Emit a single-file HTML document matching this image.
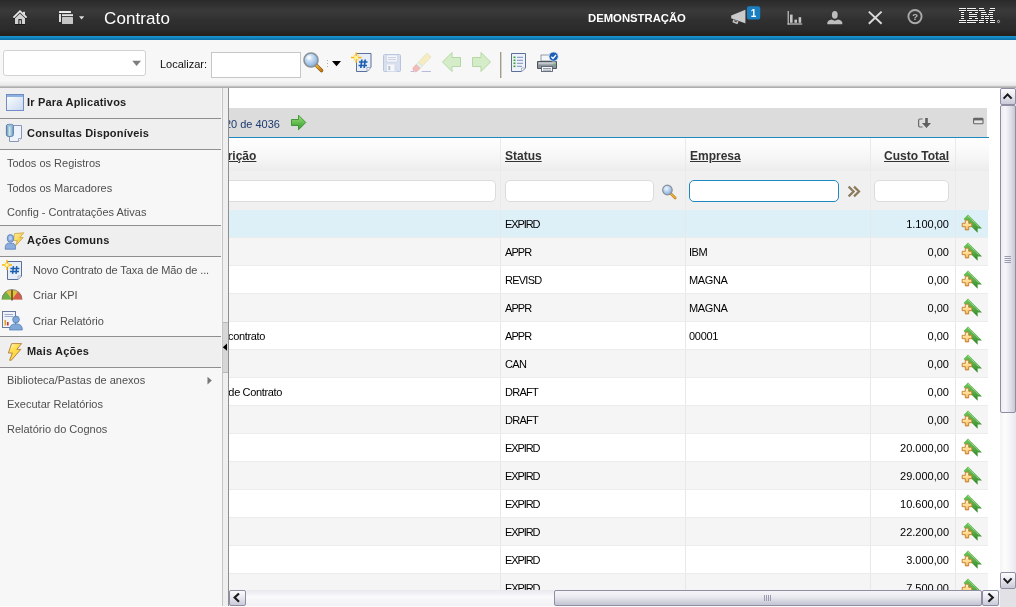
<!DOCTYPE html><html><head><meta charset="utf-8"><style>
*{box-sizing:border-box;margin:0;padding:0}
html,body{width:1016px;height:607px;overflow:hidden;background:#f7f7f7;font-family:"Liberation Sans",sans-serif;font-size:11px;color:#000}
.a{position:absolute}
.t{position:absolute;white-space:nowrap;line-height:12px;font-size:11px}
svg{position:absolute;overflow:visible}
#hdr{left:0;top:0;width:1016px;height:36px;background:linear-gradient(#2a2a2a 0px,#363636 8px,#3a3a3a 11px,#303030 20px,#2a2a2a 30px,#241f1c 35px)}
#blue{left:0;top:36px;width:1016px;height:4px;background:linear-gradient(#1c98d2,#0a6ea5)}
#tb{left:0;top:40px;width:1016px;height:48px;background:linear-gradient(#f7f7f7 0,#f7f7f7 41px,#f1f1f1 42px,#ebebeb 45px,#dadada 46px,#a8a8a8 47px,#b4b4b4 48px)}
#lp{left:0;top:88px;width:222px;height:519px;background:#f7f7f7}
.sh{position:absolute;left:0;width:221px;height:31px;background:#efefef;border-bottom:1px solid #8f8f8f}
.sht{position:absolute;left:27px;font-weight:bold;font-size:11px;line-height:12px;color:#1e1e1e;white-space:nowrap;letter-spacing:0.2px}
.li{position:absolute;left:7px;font-size:11px;line-height:12px;color:#4f4f4f;white-space:nowrap}
#spl{left:222px;top:88px;width:7px;height:519px;background:#efefef;border-left:1px solid #c4c4c4;border-right:1px solid #8e8e8e}
#main{left:229px;top:88px;width:771px;height:502px;background:#fff;overflow:hidden}
.row{position:absolute;left:0;width:759px;height:28px}
.sep{position:absolute;top:0;width:1px;height:28px;background:#e8e8e8}
.ct{position:absolute;top:9px;line-height:12px;white-space:nowrap;font-size:11px;color:#000}
.hd{position:absolute;top:61px;font-weight:bold;font-size:12px;line-height:14px;color:#333;text-decoration:underline;white-space:nowrap}
.fi{position:absolute;top:92px;height:22px;background:#fff;border:1px solid #dcdcdc;border-radius:5px}
.btn{position:absolute;border:1px solid #8e8ea2;border-radius:2px;background:linear-gradient(#fdfdff,#e6e6ee 50%,#c9c9d8)}
</style></head><body><div id="root" style="position:absolute;left:0;top:0;width:1016px;height:607px;overflow:hidden;background:#f7f7f7;will-change:transform">
<div id="hdr" class="a"></div><div id="blue" class="a"></div><div id="tb" class="a"></div>
<svg style="left:0;top:0" width="100" height="36"><g fill="#111" opacity="0.7"><rect x="15" y="24" width="10" height="1"/><rect x="13" y="18" width="2" height="1"/><rect x="25" y="18" width="2" height="1"/></g><path d="M13.4 17.6 L20 11.2 L26.6 17.6" stroke="#ececec" stroke-width="1.6" fill="none" stroke-linejoin="miter"/><rect x="22.9" y="11.8" width="2.1" height="3.6" fill="#dcdcdc"/><path d="M15 18.2 L20 13.4 L25 18.2 L25 24 L15 24Z" fill="#d2d2d2"/><rect x="18.4" y="19.1" width="3.4" height="4.9" fill="#1a1a1a"/><rect x="19.4" y="20.2" width="1.5" height="3.8" fill="#d8d8d8"/><rect x="59" y="11" width="12" height="2" rx="0.5" fill="#ededed"/><rect x="59" y="14" width="2" height="8" fill="#dedede"/><rect x="62" y="14.2" width="11" height="1.9" fill="#e6e6e6"/><rect x="62" y="17" width="11" height="7" rx="0.6" fill="#c6c6c6"/><path d="M79 16.2 L84.2 16.2 L81.6 19.6Z" fill="#dadada"/></svg>
<div class="a" style="left:104px;top:9px;font-size:17px;line-height:20px;color:#fff;letter-spacing:0.1px">Contrato</div>
<div class="a" style="left:588px;top:11px;font-size:11.3px;line-height:14px;color:#fff;font-weight:bold">DEMONSTRAÇÃO</div>
<svg style="left:720px;top:0" width="300" height="36"><path d="M11.2 15.4 L25.4 9.8 L25.4 23.6 L11.2 18.6Z" fill="#cacaca"/><path d="M11.2 18.6 L25.4 23.6" stroke="#1a1a1a" stroke-width="0.6" opacity="0.5"/><path d="M13.2 19.6 L18.6 21.6 L17.4 24.2 L12.4 22.2Z" fill="#c4c4c4"/><path d="M14.2 20.8 L16.8 21.8" stroke="#222" stroke-width="0.9"/><rect x="27" y="6.2" width="13.2" height="13.4" rx="2" fill="#1a7ec3"/><text x="33.5" y="17" font-family="Liberation Sans" font-weight="bold" font-size="10" fill="#fff" text-anchor="middle">1</text><g fill="#c4c4c4"><rect x="67.6" y="11" width="1.2" height="13.6"/><rect x="67.6" y="23.4" width="14.6" height="1.2"/><rect x="70" y="14.6" width="2.6" height="8.2"/><rect x="74.4" y="19.6" width="2.6" height="3.2"/><rect x="78.6" y="17.2" width="2.6" height="5.6"/></g><g fill="#bdbdbd"><ellipse cx="114.8" cy="14.8" rx="2.9" ry="3.9"/><path d="M107.3 24.2 L107.3 22.6 Q107.6 20.4 111.6 19.4 L114.8 20.8 L118 19.4 Q122 20.4 122.3 22.6 L122.3 24.2Z"/></g><path d="M148.8 11.6 L161.6 23.8 M161.6 11.6 L148.8 23.8" stroke="#d9d9d9" stroke-width="2" fill="none"/><circle cx="195" cy="16.6" r="6.6" stroke="#a9a9a9" stroke-width="1.9" fill="none"/><text x="195.2" y="20.4" font-family="Liberation Sans" font-weight="bold" font-size="9.6" fill="#b8b8b8" text-anchor="middle">?</text></svg>
<svg style="left:0;top:0" width="1016" height="36"><rect x="959" y="9" width="7" height="1" fill="#111"/><rect x="959" y="8" width="7" height="1.1" fill="#f2f2f2"/><rect x="967" y="9" width="9" height="1" fill="#111"/><rect x="967" y="8" width="9" height="1.1" fill="#f2f2f2"/><rect x="979" y="9" width="5" height="1" fill="#111"/><rect x="979" y="8" width="5" height="1.1" fill="#f2f2f2"/><rect x="990" y="9" width="5" height="1" fill="#111"/><rect x="990" y="8" width="5" height="1.1" fill="#f2f2f2"/><rect x="959" y="11" width="7" height="1" fill="#111"/><rect x="959" y="10" width="7" height="1.1" fill="#f2f2f2"/><rect x="967" y="11" width="11" height="1" fill="#111"/><rect x="967" y="10" width="11" height="1.1" fill="#f2f2f2"/><rect x="979" y="11" width="6" height="1" fill="#111"/><rect x="979" y="10" width="6" height="1.1" fill="#f2f2f2"/><rect x="989" y="11" width="6" height="1" fill="#111"/><rect x="989" y="10" width="6" height="1.1" fill="#f2f2f2"/><rect x="961" y="13" width="3" height="1" fill="#111"/><rect x="961" y="12" width="3" height="1.1" fill="#f2f2f2"/><rect x="969" y="13" width="3" height="1" fill="#111"/><rect x="969" y="12" width="3" height="1.1" fill="#f2f2f2"/><rect x="975" y="13" width="3" height="1" fill="#111"/><rect x="975" y="12" width="3" height="1.1" fill="#f2f2f2"/><rect x="981" y="13" width="5" height="1" fill="#111"/><rect x="981" y="12" width="5" height="1.1" fill="#f2f2f2"/><rect x="989" y="13" width="4" height="1" fill="#111"/><rect x="989" y="12" width="4" height="1.1" fill="#f2f2f2"/><rect x="961" y="15" width="3" height="1" fill="#111"/><rect x="961" y="14" width="3" height="1.1" fill="#f2f2f2"/><rect x="969" y="15" width="8" height="1" fill="#111"/><rect x="969" y="14" width="8" height="1.1" fill="#f2f2f2"/><rect x="981" y="15" width="6" height="1" fill="#111"/><rect x="981" y="14" width="6" height="1.1" fill="#f2f2f2"/><rect x="988" y="15" width="5" height="1" fill="#111"/><rect x="988" y="14" width="5" height="1.1" fill="#f2f2f2"/><rect x="961" y="17" width="3" height="1" fill="#111"/><rect x="961" y="16" width="3" height="1.1" fill="#f2f2f2"/><rect x="969" y="17" width="8" height="1" fill="#111"/><rect x="969" y="16" width="8" height="1.1" fill="#f2f2f2"/><rect x="981" y="17" width="3" height="1" fill="#111"/><rect x="981" y="16" width="3" height="1.1" fill="#f2f2f2"/><rect x="985" y="17" width="4" height="1" fill="#111"/><rect x="985" y="16" width="4" height="1.1" fill="#f2f2f2"/><rect x="990" y="17" width="3" height="1" fill="#111"/><rect x="990" y="16" width="3" height="1.1" fill="#f2f2f2"/><rect x="961" y="19" width="3" height="1" fill="#111"/><rect x="961" y="18" width="3" height="1.1" fill="#f2f2f2"/><rect x="969" y="19" width="3" height="1" fill="#111"/><rect x="969" y="18" width="3" height="1.1" fill="#f2f2f2"/><rect x="975" y="19" width="3" height="1" fill="#111"/><rect x="975" y="18" width="3" height="1.1" fill="#f2f2f2"/><rect x="981" y="19" width="3" height="1" fill="#111"/><rect x="981" y="18" width="3" height="1.1" fill="#f2f2f2"/><rect x="985" y="19" width="4" height="1" fill="#111"/><rect x="985" y="18" width="4" height="1.1" fill="#f2f2f2"/><rect x="990" y="19" width="3" height="1" fill="#111"/><rect x="990" y="18" width="3" height="1.1" fill="#f2f2f2"/><rect x="959" y="21" width="7" height="1" fill="#111"/><rect x="959" y="20" width="7" height="1.1" fill="#f2f2f2"/><rect x="967" y="21" width="11" height="1" fill="#111"/><rect x="967" y="20" width="11" height="1.1" fill="#f2f2f2"/><rect x="979" y="21" width="5" height="1" fill="#111"/><rect x="979" y="20" width="5" height="1.1" fill="#f2f2f2"/><rect x="986" y="21" width="2" height="1" fill="#111"/><rect x="986" y="20" width="2" height="1.1" fill="#f2f2f2"/><rect x="990" y="21" width="5" height="1" fill="#111"/><rect x="990" y="20" width="5" height="1.1" fill="#f2f2f2"/><rect x="959" y="23" width="7" height="1" fill="#111"/><rect x="959" y="22" width="7" height="1.1" fill="#f2f2f2"/><rect x="967" y="23" width="9" height="1" fill="#111"/><rect x="967" y="22" width="9" height="1.1" fill="#f2f2f2"/><rect x="979" y="23" width="5" height="1" fill="#111"/><rect x="979" y="22" width="5" height="1.1" fill="#f2f2f2"/><rect x="986" y="23" width="2" height="1" fill="#111"/><rect x="986" y="22" width="2" height="1.1" fill="#f2f2f2"/><rect x="990" y="23" width="5" height="1" fill="#111"/><rect x="990" y="22" width="5" height="1.1" fill="#f2f2f2"/><circle cx="998.5" cy="21.5" r="1.1" fill="none" stroke="#d0d0d0" stroke-width="0.8"/></svg>
<div class="a" style="left:3px;top:50px;width:143px;height:26px;background:#fff;border:1px solid #d2d2d2;border-radius:3px"></div>
<svg style="left:0;top:40px" width="600" height="48"><path d="M132.2 20.8 L141 20.8 L136.6 26Z" fill="#7e7e7e"/></svg>
<div class="t" style="left:160px;top:58px;color:#111">Localizar:</div>
<div class="a" style="left:211px;top:52px;width:90px;height:26px;background:#fff;border:1px solid #c6c6c6"></div>
<svg style="left:0;top:0" width="600" height="90"><defs><radialGradient id="lens" cx="0.4" cy="0.35" r="0.7"><stop offset="0" stop-color="#eef6ff"/><stop offset="0.6" stop-color="#a9c8ea"/><stop offset="1" stop-color="#7fa6d2"/></radialGradient><linearGradient id="hnd" x1="0" y1="0" x2="1" y2="1"><stop offset="0" stop-color="#f7c23a"/><stop offset="1" stop-color="#c77a10"/></linearGradient></defs><path d="M315.5 64.5 L321.5 70.5" stroke="#8c5a10" stroke-width="3.6" stroke-linecap="round"/><path d="M315.5 64.5 L321.5 70.5" stroke="url(#hnd)" stroke-width="2.4" stroke-linecap="round"/><circle cx="311" cy="60" r="7" fill="url(#lens)" stroke="#8a8f98" stroke-width="1.6"/><circle cx="308.8" cy="57.6" r="2.2" fill="#fff" opacity="0.6"/><g fill="#b0b0b0"><rect x="327" y="60" width="1" height="1"/><rect x="327" y="63" width="1" height="1"/><rect x="327" y="66" width="1" height="1"/></g><path d="M332 61 L341 61 L336.5 66.3Z" fill="#000"/><path d="M356.5 53.5 L371 53.5 L371 67 L367 71.5 L356.5 71.5Z" fill="#e8eef8" stroke="#5a6f9a" stroke-width="1"/><path d="M367 71.5 L367 67.5 L371 67.5Z" fill="#fff" stroke="#8a9bb8" stroke-width="0.8"/><g stroke="#1d5fb0" stroke-width="1.7" fill="none"><path d="M361.8 59.5 L360.8 68 M365.2 59.5 L364.2 68 M359 62 L367.5 62 M358.5 65.5 L367 65.5"/></g><g stroke="#ffb400" stroke-width="1.5" fill="none"><path d="M351 57.6 L361.4 57.6 M356.2 52.4 L356.2 62.8"/></g><g stroke="#ffc800" stroke-width="0.8" fill="none"><path d="M353.6 55 L358.8 60.2 M358.8 55 L353.6 60.2"/></g><circle cx="356.2" cy="57.6" r="1.9" fill="#fff4a0"/><g opacity="0.6"><rect x="383.5" y="54.5" width="17" height="17" rx="1" fill="#c4d0ea" stroke="#90a4cc"/><rect x="386.5" y="55" width="11" height="7" fill="#f4f6fb" stroke="#a8b6d4" stroke-width="0.6"/><path d="M388 57.5 L396 57.5 M388 59.5 L396 59.5" stroke="#98a8cc" stroke-width="0.8"/><rect x="387" y="64.5" width="10" height="7" fill="#f4f6fb"/><rect x="388.4" y="66" width="1.8" height="4.2" fill="#8898bc"/><rect x="394.4" y="64.5" width="2.6" height="7" fill="#c0cce6"/></g><g opacity="0.55"><g transform="translate(416.2,68.4) rotate(-46)"><rect x="5.6" y="-2.8" width="13" height="5.6" rx="1.2" fill="#f4e49a" stroke="#d8c070" stroke-width="0.6"/><rect x="2.6" y="-2.8" width="3.4" height="5.6" fill="#d8f0e8" stroke="#98c8b8" stroke-width="0.5"/><path d="M2.8 -2.8 L-1 -2.8 Q-3.4 -2.8 -3.4 0 Q-3.4 2.8 -1 2.8 L2.8 2.8Z" fill="#f08a8a" stroke="#c86a6a" stroke-width="0.5"/></g><path d="M410.6 71.5 L414 71.5 M421.6 71.5 L431 71.5" stroke="#8a8ad0" stroke-width="1.2"/></g><path d="M442.5 62 L452 52.5 L452 57.5 L460.5 57.5 L460.5 66.5 L452 66.5 L452 71.5Z" fill="#d4ecc8" stroke="#b4d8a4" stroke-width="1"/><path d="M490.5 62 L481 52.5 L481 57.5 L472.5 57.5 L472.5 66.5 L481 66.5 L481 71.5Z" fill="#d4ecc8" stroke="#b4d8a4" stroke-width="1"/><rect x="500" y="52" width="1.4" height="26" fill="#a39e8c"/><path d="M511.5 53.5 L525.5 53.5 L525.5 68 L521.5 71.5 L511.5 71.5Z" fill="#eef2fa" stroke="#5f6f95" stroke-width="1"/><path d="M521.5 71.5 L521.5 68 L525.5 68Z" fill="#fff" stroke="#8a9bb8" stroke-width="0.7"/><g fill="#3aa52a"><rect x="513.5" y="56.5" width="2" height="1.6"/><rect x="513.5" y="59.5" width="2" height="1.6"/><rect x="513.5" y="62.5" width="2" height="1.6"/><rect x="513.5" y="65.5" width="2" height="1.6"/></g><g fill="#7f8fb8"><rect x="517" y="56.8" width="6" height="1"/><rect x="517" y="59.8" width="6" height="1"/><rect x="517" y="62.8" width="6" height="1"/><rect x="517" y="65.8" width="5" height="1"/></g><rect x="541" y="55" width="11" height="6" fill="#f4f6fa" stroke="#7c8494" stroke-width="0.8"/><path d="M537.5 61.5 L556.5 61.5 L556.5 68.5 L537.5 68.5Z" fill="#8e949c" stroke="#4e545c" stroke-width="1"/><rect x="538.5" y="62.2" width="17" height="2.2" fill="#c4c8ce"/><rect x="541.5" y="66.5" width="11" height="5" fill="#f4f6fa" stroke="#5a6472" stroke-width="0.9"/><path d="M543 68.5 L551 68.5 M543 70.2 L551 70.2" stroke="#6e7888" stroke-width="0.7"/><rect x="553.5" y="63.5" width="1.5" height="1.2" fill="#3c3"/><circle cx="553.6" cy="56.6" r="4.6" fill="#1b5fb8" stroke="#d8e4f4" stroke-width="0.8"/><path d="M551.3 56.8 L553 58.5 L556 55" stroke="#fff" stroke-width="1.3" fill="none"/></svg>
<div id="lp" class="a">
<div class="sh" style="top:0;height:31px"></div>
<div class="sh" style="top:31px;height:31px"></div>
<div class="sht" style="top:8px">Ir Para Aplicativos</div>
<div class="sht" style="top:39px">Consultas Disponíveis</div>
<div class="li" style="top:69px">Todos os Registros</div>
<div class="li" style="top:94px">Todos os Marcadores</div>
<div class="li" style="top:118px">Config - Contratações Ativas</div>
<div class="sh" style="top:137px;height:32px;border-top:1px solid #8f8f8f"></div>
<div class="sht" style="top:146px">Ações Comuns</div>
<div class="li" style="left:33px;top:176px;letter-spacing:-0.1px">Novo Contrato de Taxa de Mão de ...</div>
<div class="li" style="left:33px;top:201px">Criar KPI</div>
<div class="li" style="left:33px;top:227px">Criar Relatório</div>
<div class="sh" style="top:248px;height:32px;border-top:1px solid #8f8f8f"></div>
<div class="sht" style="top:257px">Mais Ações</div>
<div class="li" style="top:286px">Biblioteca/Pastas de anexos</div>
<div class="li" style="top:310px">Executar Relatórios</div>
<div class="li" style="top:335px">Relatório do Cognos</div>
</div>
<svg style="left:0;top:0" width="230" height="607"><defs><linearGradient id="win" x1="0" y1="0" x2="1" y2="1"><stop offset="0" stop-color="#ffffff"/><stop offset="1" stop-color="#c8d8f0"/></linearGradient><linearGradient id="bolt" x1="0" y1="0" x2="1" y2="1"><stop offset="0" stop-color="#fff3a0"/><stop offset="1" stop-color="#f0b818"/></linearGradient><linearGradient id="bolt2" x1="0" y1="0" x2="0.6" y2="1"><stop offset="0" stop-color="#fffbe0"/><stop offset="0.4" stop-color="#ffe050"/><stop offset="1" stop-color="#f8d040"/></linearGradient><linearGradient id="cyl" x1="0" y1="0" x2="1" y2="0"><stop offset="0" stop-color="#5a8ab0"/><stop offset="0.45" stop-color="#d0e6ee"/><stop offset="1" stop-color="#6a98b8"/></linearGradient></defs><rect x="6.5" y="94.5" width="17" height="16" fill="url(#win)" stroke="#6e8ec4" stroke-width="1"/><rect x="7" y="95" width="16" height="2" fill="#8eb0e0"/><path d="M9.5 125.5 L21.5 125.5 L21.5 138.5 L18.5 141.5 L9.5 141.5Z" fill="#eef2fa" stroke="#8a96b8" stroke-width="1"/><path d="M18.5 141.5 L18.5 138.5 L21.5 138.5" fill="#fff" stroke="#8a96b8" stroke-width="0.8"/><rect x="6.4" y="124.4" width="7" height="12" rx="1.8" fill="url(#cyl)" stroke="#4f78a8" stroke-width="0.9"/><ellipse cx="9.9" cy="125.8" rx="3" ry="1" fill="#9ac0d8"/><path d="M14.5 233.6 L23.8 232.8 L19.8 237.6 L23.2 237.6 L15.2 246.2 L17.4 240.6 L13.4 240.6Z" fill="url(#bolt)" stroke="#c89a30" stroke-width="0.7"/><path d="M5.2 249.2 Q5 243.6 8.2 243.2 L12.6 243.2 Q15.8 243.6 15.6 249.2Z" fill="#8aaee0" stroke="#5c7cb8" stroke-width="0.8"/><ellipse cx="10.4" cy="238.4" rx="3.2" ry="3.9" fill="#8aaee0" stroke="#5c7cb8" stroke-width="0.8"/><ellipse cx="10.4" cy="238" rx="1.6" ry="2" fill="#b8d0f0"/><path d="M7.5 261.5 L21.5 261.5 L21.5 276 L18 279.5 L7.5 279.5Z" fill="#e8eef8" stroke="#5a6f9a" stroke-width="1"/><path d="M18 279.5 L18 276 L21.5 276Z" fill="#fff" stroke="#8a9bb8" stroke-width="0.7"/><g stroke="#1d5fb0" stroke-width="1.5" fill="none"><path d="M13.4 266.2 L12.6 273.8 M16.8 266.2 L16 273.8 M10.4 268.6 L19.4 268.6 M10 271.6 L19 271.6"/></g><g stroke="#ffb400" stroke-width="1.5" fill="none"><path d="M2 265 L12 265 M7 260 L7 270"/></g><g stroke="#ffc800" stroke-width="0.8" fill="none"><path d="M4.6 262.6 L9.4 267.4 M9.4 262.6 L4.6 267.4"/></g><circle cx="7" cy="265" r="1.8" fill="#fff4a0"/><path d="M2 299.5 A10 10 0 0 1 22 299.5Z" fill="#e0c040"/><path d="M2 299.5 A10 10 0 0 1 6 291.5 L12 299.5Z" fill="#6cb04a"/><path d="M22 299.5 A10 10 0 0 0 18 291.5 L12 299.5Z" fill="#d85a4a"/><path d="M2 299.5 A10 10 0 0 1 22 299.5" fill="none" stroke="#777" stroke-width="0.8"/><rect x="11.5" y="290" width="1" height="10.5" fill="#111"/><rect x="2.5" y="311.5" width="13" height="16" fill="#f0f4fa" stroke="#6a7a9a" stroke-width="1"/><path d="M4.5 314.5 L13 314.5 M4.5 316.5 L13 316.5" stroke="#8a9ac0" stroke-width="0.8"/><rect x="4.5" y="320" width="1.6" height="5.5" fill="#e0a020"/><rect x="7" y="322" width="1.6" height="3.5" fill="#d03030"/><circle cx="16" cy="319.5" r="3.4" fill="#7fa8d8" stroke="#4a78b0" stroke-width="0.7"/><path d="M9.5 330 Q9.5 323.8 16 323.8 Q22.4 323.8 22.4 330Z" fill="#7fa8d8" stroke="#4a78b0" stroke-width="0.7"/><path d="M11.6 343.6 L21.6 343.6 L16.8 349.4 L20.8 349.4 L11.2 360.4 L9.6 360.2 L12.4 353 L8.4 353Z" fill="url(#bolt2)" stroke="#b07c3a" stroke-width="0.9" stroke-linejoin="round"/><path d="M207.5 376.8 L211.8 380.6 L207.5 384.4Z" fill="#777"/></svg>
<div id="spl" class="a"></div>
<div class="a" style="left:223px;top:322px;width:5px;height:51px;background:#d6d6d6;border-top:1px solid #b8b8b8;border-bottom:1px solid #b8b8b8"></div>
<svg style="left:0;top:0" width="230" height="607"><path d="M222.8 347.2 L227 343.6 L227 350.8Z" fill="#000"/></svg>
<div id="main" class="a">
<div class="a" style="left:0;top:20px;width:758px;height:29px;background:#dcdcdc"></div>
<div class="a" style="left:0;top:49px;width:760px;height:1px;background:#1e88c0"></div>
<div class="t" style="left:-20px;top:30px;color:#1c3a6e">1 - 20 de 4036</div>
<div class="a" style="left:0;top:50px;width:760px;height:33px;background:linear-gradient(#ffffff,#f6f6f6 60%,#ececec)"></div>
<div class="a" style="left:0;top:83px;width:760px;height:39px;background:#f0f0f0"></div><div class="a" style="left:0;top:121px;width:760px;height:1px;background:#f0f0f0;z-index:5"></div>
<div class="a" style="left:271px;top:50px;width:1px;height:72px;background:#eaeaea"></div>
<div class="a" style="left:456px;top:50px;width:1px;height:72px;background:#eaeaea"></div>
<div class="a" style="left:641px;top:50px;width:1px;height:72px;background:#eaeaea"></div>
<div class="a" style="left:726px;top:50px;width:1px;height:72px;background:#eaeaea"></div>
<div class="hd" style="left:-30px">Descrição</div>
<div class="hd" style="left:276px">Status</div>
<div class="hd" style="left:461px">Empresa</div>
<div class="hd" style="left:655px">Custo Total</div>
<div class="fi" style="left:-20px;width:287px"></div>
<div class="fi" style="left:276px;width:149px"></div>
<div class="fi" style="left:460px;width:150px;border:1.5px solid #1e88c0"></div>
<div class="fi" style="left:645px;width:75px"></div>
<div class="row" style="top:121px;background:#ddf0f8">
<div class="sep" style="left:271px"></div><div class="sep" style="left:456px"></div><div class="sep" style="left:641px"></div><div class="sep" style="left:726px"></div>
<div class="ct" style="left:276px;letter-spacing:-1.1px">EXPIRD</div>
<div class="ct" style="right:39px">1.100,00</div>
</div>
<div class="row" style="top:149px;background:#f5f5f5">
<div class="sep" style="left:271px"></div><div class="sep" style="left:456px"></div><div class="sep" style="left:641px"></div><div class="sep" style="left:726px"></div>
<div class="ct" style="left:276px;letter-spacing:-0.9px">APPR</div>
<div class="ct" style="left:460px;letter-spacing:-0.5px">IBM</div>
<div class="ct" style="right:39px">0,00</div>
</div>
<div class="a" style="left:0;top:149px;width:759px;height:1px;background:#ececec"></div>
<div class="row" style="top:177px;background:#ffffff">
<div class="sep" style="left:271px"></div><div class="sep" style="left:456px"></div><div class="sep" style="left:641px"></div><div class="sep" style="left:726px"></div>
<div class="ct" style="left:276px;letter-spacing:-0.75px">REVISD</div>
<div class="ct" style="left:460px;letter-spacing:-0.36px">MAGNA</div>
<div class="ct" style="right:39px">0,00</div>
</div>
<div class="a" style="left:0;top:177px;width:759px;height:1px;background:#ececec"></div>
<div class="row" style="top:205px;background:#f5f5f5">
<div class="sep" style="left:271px"></div><div class="sep" style="left:456px"></div><div class="sep" style="left:641px"></div><div class="sep" style="left:726px"></div>
<div class="ct" style="left:276px;letter-spacing:-0.9px">APPR</div>
<div class="ct" style="left:460px;letter-spacing:-0.36px">MAGNA</div>
<div class="ct" style="right:39px">0,00</div>
</div>
<div class="a" style="left:0;top:205px;width:759px;height:1px;background:#ececec"></div>
<div class="row" style="top:233px;background:#ffffff">
<div class="ct" style="right:723px;letter-spacing:-0.35px">Descrição do contrato</div>
<div class="sep" style="left:271px"></div><div class="sep" style="left:456px"></div><div class="sep" style="left:641px"></div><div class="sep" style="left:726px"></div>
<div class="ct" style="left:276px;letter-spacing:-0.9px">APPR</div>
<div class="ct" style="left:460px;letter-spacing:-0.3px">00001</div>
<div class="ct" style="right:39px">0,00</div>
</div>
<div class="a" style="left:0;top:233px;width:759px;height:1px;background:#ececec"></div>
<div class="row" style="top:261px;background:#f5f5f5">
<div class="sep" style="left:271px"></div><div class="sep" style="left:456px"></div><div class="sep" style="left:641px"></div><div class="sep" style="left:726px"></div>
<div class="ct" style="left:276px;letter-spacing:-0.7px">CAN</div>
<div class="ct" style="right:39px">0,00</div>
</div>
<div class="a" style="left:0;top:261px;width:759px;height:1px;background:#ececec"></div>
<div class="row" style="top:289px;background:#ffffff">
<div class="ct" style="right:706px;letter-spacing:-0.35px">Descrição de Contrato</div>
<div class="sep" style="left:271px"></div><div class="sep" style="left:456px"></div><div class="sep" style="left:641px"></div><div class="sep" style="left:726px"></div>
<div class="ct" style="left:276px;letter-spacing:-0.75px">DRAFT</div>
<div class="ct" style="right:39px">0,00</div>
</div>
<div class="a" style="left:0;top:289px;width:759px;height:1px;background:#ececec"></div>
<div class="row" style="top:317px;background:#f5f5f5">
<div class="sep" style="left:271px"></div><div class="sep" style="left:456px"></div><div class="sep" style="left:641px"></div><div class="sep" style="left:726px"></div>
<div class="ct" style="left:276px;letter-spacing:-0.75px">DRAFT</div>
<div class="ct" style="right:39px">0,00</div>
</div>
<div class="a" style="left:0;top:317px;width:759px;height:1px;background:#ececec"></div>
<div class="row" style="top:345px;background:#ffffff">
<div class="sep" style="left:271px"></div><div class="sep" style="left:456px"></div><div class="sep" style="left:641px"></div><div class="sep" style="left:726px"></div>
<div class="ct" style="left:276px;letter-spacing:-1.1px">EXPIRD</div>
<div class="ct" style="right:39px">20.000,00</div>
</div>
<div class="a" style="left:0;top:345px;width:759px;height:1px;background:#ececec"></div>
<div class="row" style="top:373px;background:#f5f5f5">
<div class="sep" style="left:271px"></div><div class="sep" style="left:456px"></div><div class="sep" style="left:641px"></div><div class="sep" style="left:726px"></div>
<div class="ct" style="left:276px;letter-spacing:-1.1px">EXPIRD</div>
<div class="ct" style="right:39px">29.000,00</div>
</div>
<div class="a" style="left:0;top:373px;width:759px;height:1px;background:#ececec"></div>
<div class="row" style="top:401px;background:#ffffff">
<div class="sep" style="left:271px"></div><div class="sep" style="left:456px"></div><div class="sep" style="left:641px"></div><div class="sep" style="left:726px"></div>
<div class="ct" style="left:276px;letter-spacing:-1.1px">EXPIRD</div>
<div class="ct" style="right:39px">10.600,00</div>
</div>
<div class="a" style="left:0;top:401px;width:759px;height:1px;background:#ececec"></div>
<div class="row" style="top:429px;background:#f5f5f5">
<div class="sep" style="left:271px"></div><div class="sep" style="left:456px"></div><div class="sep" style="left:641px"></div><div class="sep" style="left:726px"></div>
<div class="ct" style="left:276px;letter-spacing:-1.1px">EXPIRD</div>
<div class="ct" style="right:39px">22.200,00</div>
</div>
<div class="a" style="left:0;top:429px;width:759px;height:1px;background:#ececec"></div>
<div class="row" style="top:457px;background:#ffffff">
<div class="sep" style="left:271px"></div><div class="sep" style="left:456px"></div><div class="sep" style="left:641px"></div><div class="sep" style="left:726px"></div>
<div class="ct" style="left:276px;letter-spacing:-1.1px">EXPIRD</div>
<div class="ct" style="right:39px">3.000,00</div>
</div>
<div class="a" style="left:0;top:457px;width:759px;height:1px;background:#ececec"></div>
<div class="row" style="top:485px;background:#f5f5f5">
<div class="sep" style="left:271px"></div><div class="sep" style="left:456px"></div><div class="sep" style="left:641px"></div><div class="sep" style="left:726px"></div>
<div class="ct" style="left:276px;letter-spacing:-1.1px">EXPIRD</div>
<div class="ct" style="right:39px">7.500,00</div>
</div>
<div class="a" style="left:0;top:485px;width:759px;height:1px;background:#ececec"></div>
</div>
<svg style="left:229px;top:88px" width="771" height="502" viewBox="229 88 771 502"><defs><linearGradient id="ga" x1="0" y1="0" x2="0" y2="1"><stop offset="0" stop-color="#9de07a"/><stop offset="1" stop-color="#2f9a2a"/></linearGradient><linearGradient id="rib" x1="0" y1="0" x2="0" y2="1" gradientUnits="objectBoundingBox"><stop offset="0" stop-color="#6cc65a"/><stop offset="0.5" stop-color="#5ab04a"/><stop offset="1" stop-color="#2a8424"/></linearGradient><linearGradient id="plus" x1="0" y1="0" x2="0" y2="1"><stop offset="0" stop-color="#fff4c8"/><stop offset="0.6" stop-color="#ffd88a"/><stop offset="1" stop-color="#f0b050"/></linearGradient><clipPath id="cl"><rect x="229" y="88" width="771" height="502"/></clipPath></defs><g clip-path="url(#cl)"><path d="M291.5 119.5 L298.5 119.5 L298.5 115.2 L305.8 122.5 L298.5 129.8 L298.5 125.5 L291.5 125.5Z" fill="url(#ga)" stroke="#2a8a20" stroke-width="0.8"/><path d="M922.6 119 L920 119 Q918.6 119 918.6 120.4 L918.6 125.6 Q918.6 127 920 127 L922.6 127" stroke="#6a6a6a" stroke-width="1.2" fill="none"/><path d="M925.2 118 L927.8 118 L927.8 123 L931 123 L926.5 128 L922 123 L925.2 123Z" fill="#5e5e5e"/><rect x="973.6" y="118.4" width="9.4" height="5.4" rx="0.9" fill="#e6e6e6" stroke="#666" stroke-width="1.1"/><rect x="973.6" y="118.4" width="9.4" height="2" fill="#666"/><path d="M670.6 193.4 L675.2 198" stroke="#b07a18" stroke-width="2.6" stroke-linecap="round"/><path d="M670.6 193.4 L675.2 198" stroke="#f2b640" stroke-width="1.4" stroke-linecap="round"/><circle cx="667.4" cy="190" r="4.8" fill="url(#lens)" stroke="#8a8f98" stroke-width="1.2"/><path d="M848.6 186.6 L853.6 191.5 L848.6 196.4 M854 186.6 L859 191.5 L854 196.4" stroke="#8c7a5c" stroke-width="2.2" fill="none"/><g transform="translate(962,215)"><path d="M6 -0.6 L20 13.4 L15.6 13.4 L15.7 17.8 L1.6 4Z" fill="url(#rib)"/><path d="M6.2 1.2 L17.6 12.6" stroke="#e8ffe0" stroke-width="0.8" stroke-dasharray="1 0.8" opacity="0.8"/><path d="M0.2 8.3 L0.2 11.7 L3.3 11.7 L3.3 14.9 L6.7 14.9 L6.7 11.7 L9.8 11.7 L9.8 8.3 L6.7 8.3 L6.7 5.2 L3.3 5.2 L3.3 8.3Z" fill="url(#plus)" stroke="#c27a2a" stroke-width="0.9" stroke-linejoin="round"/></g><g transform="translate(962,243)"><path d="M6 -0.6 L20 13.4 L15.6 13.4 L15.7 17.8 L1.6 4Z" fill="url(#rib)"/><path d="M6.2 1.2 L17.6 12.6" stroke="#e8ffe0" stroke-width="0.8" stroke-dasharray="1 0.8" opacity="0.8"/><path d="M0.2 8.3 L0.2 11.7 L3.3 11.7 L3.3 14.9 L6.7 14.9 L6.7 11.7 L9.8 11.7 L9.8 8.3 L6.7 8.3 L6.7 5.2 L3.3 5.2 L3.3 8.3Z" fill="url(#plus)" stroke="#c27a2a" stroke-width="0.9" stroke-linejoin="round"/></g><g transform="translate(962,271)"><path d="M6 -0.6 L20 13.4 L15.6 13.4 L15.7 17.8 L1.6 4Z" fill="url(#rib)"/><path d="M6.2 1.2 L17.6 12.6" stroke="#e8ffe0" stroke-width="0.8" stroke-dasharray="1 0.8" opacity="0.8"/><path d="M0.2 8.3 L0.2 11.7 L3.3 11.7 L3.3 14.9 L6.7 14.9 L6.7 11.7 L9.8 11.7 L9.8 8.3 L6.7 8.3 L6.7 5.2 L3.3 5.2 L3.3 8.3Z" fill="url(#plus)" stroke="#c27a2a" stroke-width="0.9" stroke-linejoin="round"/></g><g transform="translate(962,299)"><path d="M6 -0.6 L20 13.4 L15.6 13.4 L15.7 17.8 L1.6 4Z" fill="url(#rib)"/><path d="M6.2 1.2 L17.6 12.6" stroke="#e8ffe0" stroke-width="0.8" stroke-dasharray="1 0.8" opacity="0.8"/><path d="M0.2 8.3 L0.2 11.7 L3.3 11.7 L3.3 14.9 L6.7 14.9 L6.7 11.7 L9.8 11.7 L9.8 8.3 L6.7 8.3 L6.7 5.2 L3.3 5.2 L3.3 8.3Z" fill="url(#plus)" stroke="#c27a2a" stroke-width="0.9" stroke-linejoin="round"/></g><g transform="translate(962,327)"><path d="M6 -0.6 L20 13.4 L15.6 13.4 L15.7 17.8 L1.6 4Z" fill="url(#rib)"/><path d="M6.2 1.2 L17.6 12.6" stroke="#e8ffe0" stroke-width="0.8" stroke-dasharray="1 0.8" opacity="0.8"/><path d="M0.2 8.3 L0.2 11.7 L3.3 11.7 L3.3 14.9 L6.7 14.9 L6.7 11.7 L9.8 11.7 L9.8 8.3 L6.7 8.3 L6.7 5.2 L3.3 5.2 L3.3 8.3Z" fill="url(#plus)" stroke="#c27a2a" stroke-width="0.9" stroke-linejoin="round"/></g><g transform="translate(962,355)"><path d="M6 -0.6 L20 13.4 L15.6 13.4 L15.7 17.8 L1.6 4Z" fill="url(#rib)"/><path d="M6.2 1.2 L17.6 12.6" stroke="#e8ffe0" stroke-width="0.8" stroke-dasharray="1 0.8" opacity="0.8"/><path d="M0.2 8.3 L0.2 11.7 L3.3 11.7 L3.3 14.9 L6.7 14.9 L6.7 11.7 L9.8 11.7 L9.8 8.3 L6.7 8.3 L6.7 5.2 L3.3 5.2 L3.3 8.3Z" fill="url(#plus)" stroke="#c27a2a" stroke-width="0.9" stroke-linejoin="round"/></g><g transform="translate(962,383)"><path d="M6 -0.6 L20 13.4 L15.6 13.4 L15.7 17.8 L1.6 4Z" fill="url(#rib)"/><path d="M6.2 1.2 L17.6 12.6" stroke="#e8ffe0" stroke-width="0.8" stroke-dasharray="1 0.8" opacity="0.8"/><path d="M0.2 8.3 L0.2 11.7 L3.3 11.7 L3.3 14.9 L6.7 14.9 L6.7 11.7 L9.8 11.7 L9.8 8.3 L6.7 8.3 L6.7 5.2 L3.3 5.2 L3.3 8.3Z" fill="url(#plus)" stroke="#c27a2a" stroke-width="0.9" stroke-linejoin="round"/></g><g transform="translate(962,411)"><path d="M6 -0.6 L20 13.4 L15.6 13.4 L15.7 17.8 L1.6 4Z" fill="url(#rib)"/><path d="M6.2 1.2 L17.6 12.6" stroke="#e8ffe0" stroke-width="0.8" stroke-dasharray="1 0.8" opacity="0.8"/><path d="M0.2 8.3 L0.2 11.7 L3.3 11.7 L3.3 14.9 L6.7 14.9 L6.7 11.7 L9.8 11.7 L9.8 8.3 L6.7 8.3 L6.7 5.2 L3.3 5.2 L3.3 8.3Z" fill="url(#plus)" stroke="#c27a2a" stroke-width="0.9" stroke-linejoin="round"/></g><g transform="translate(962,439)"><path d="M6 -0.6 L20 13.4 L15.6 13.4 L15.7 17.8 L1.6 4Z" fill="url(#rib)"/><path d="M6.2 1.2 L17.6 12.6" stroke="#e8ffe0" stroke-width="0.8" stroke-dasharray="1 0.8" opacity="0.8"/><path d="M0.2 8.3 L0.2 11.7 L3.3 11.7 L3.3 14.9 L6.7 14.9 L6.7 11.7 L9.8 11.7 L9.8 8.3 L6.7 8.3 L6.7 5.2 L3.3 5.2 L3.3 8.3Z" fill="url(#plus)" stroke="#c27a2a" stroke-width="0.9" stroke-linejoin="round"/></g><g transform="translate(962,467)"><path d="M6 -0.6 L20 13.4 L15.6 13.4 L15.7 17.8 L1.6 4Z" fill="url(#rib)"/><path d="M6.2 1.2 L17.6 12.6" stroke="#e8ffe0" stroke-width="0.8" stroke-dasharray="1 0.8" opacity="0.8"/><path d="M0.2 8.3 L0.2 11.7 L3.3 11.7 L3.3 14.9 L6.7 14.9 L6.7 11.7 L9.8 11.7 L9.8 8.3 L6.7 8.3 L6.7 5.2 L3.3 5.2 L3.3 8.3Z" fill="url(#plus)" stroke="#c27a2a" stroke-width="0.9" stroke-linejoin="round"/></g><g transform="translate(962,495)"><path d="M6 -0.6 L20 13.4 L15.6 13.4 L15.7 17.8 L1.6 4Z" fill="url(#rib)"/><path d="M6.2 1.2 L17.6 12.6" stroke="#e8ffe0" stroke-width="0.8" stroke-dasharray="1 0.8" opacity="0.8"/><path d="M0.2 8.3 L0.2 11.7 L3.3 11.7 L3.3 14.9 L6.7 14.9 L6.7 11.7 L9.8 11.7 L9.8 8.3 L6.7 8.3 L6.7 5.2 L3.3 5.2 L3.3 8.3Z" fill="url(#plus)" stroke="#c27a2a" stroke-width="0.9" stroke-linejoin="round"/></g><g transform="translate(962,523)"><path d="M6 -0.6 L20 13.4 L15.6 13.4 L15.7 17.8 L1.6 4Z" fill="url(#rib)"/><path d="M6.2 1.2 L17.6 12.6" stroke="#e8ffe0" stroke-width="0.8" stroke-dasharray="1 0.8" opacity="0.8"/><path d="M0.2 8.3 L0.2 11.7 L3.3 11.7 L3.3 14.9 L6.7 14.9 L6.7 11.7 L9.8 11.7 L9.8 8.3 L6.7 8.3 L6.7 5.2 L3.3 5.2 L3.3 8.3Z" fill="url(#plus)" stroke="#c27a2a" stroke-width="0.9" stroke-linejoin="round"/></g><g transform="translate(962,551)"><path d="M6 -0.6 L20 13.4 L15.6 13.4 L15.7 17.8 L1.6 4Z" fill="url(#rib)"/><path d="M6.2 1.2 L17.6 12.6" stroke="#e8ffe0" stroke-width="0.8" stroke-dasharray="1 0.8" opacity="0.8"/><path d="M0.2 8.3 L0.2 11.7 L3.3 11.7 L3.3 14.9 L6.7 14.9 L6.7 11.7 L9.8 11.7 L9.8 8.3 L6.7 8.3 L6.7 5.2 L3.3 5.2 L3.3 8.3Z" fill="url(#plus)" stroke="#c27a2a" stroke-width="0.9" stroke-linejoin="round"/></g><g transform="translate(962,579)"><path d="M6 -0.6 L20 13.4 L15.6 13.4 L15.7 17.8 L1.6 4Z" fill="url(#rib)"/><path d="M6.2 1.2 L17.6 12.6" stroke="#e8ffe0" stroke-width="0.8" stroke-dasharray="1 0.8" opacity="0.8"/><path d="M0.2 8.3 L0.2 11.7 L3.3 11.7 L3.3 14.9 L6.7 14.9 L6.7 11.7 L9.8 11.7 L9.8 8.3 L6.7 8.3 L6.7 5.2 L3.3 5.2 L3.3 8.3Z" fill="url(#plus)" stroke="#c27a2a" stroke-width="0.9" stroke-linejoin="round"/></g></g></svg>
<div class="a" style="left:1000px;top:88px;width:16px;height:501px;background:linear-gradient(90deg,#f3f3f6,#fdfdfd 30%,#f0f0f4 80%,#e8e8ee)"></div>
<div class="btn" style="left:1000px;top:88px;width:16px;height:17px"></div>
<div class="a" style="left:1000px;top:105px;width:16px;height:308px;border:1px solid #8e8ea2;border-radius:2px;background:linear-gradient(90deg,#ececf2,#f6f6fa 30%,#dcdce6 75%,#c8c8d6)"></div>
<div class="btn" style="left:1000px;top:572px;width:16px;height:17px"></div>
<div class="a" style="left:1000px;top:589px;width:16px;height:18px;background:#e2e2e6"></div>
<div class="a" style="left:229px;top:590px;width:771px;height:17px;background:linear-gradient(#e8e8ee,#fafafc 40%,#f0f0f4)"></div>
<div class="btn" style="left:229px;top:590px;width:17px;height:16px"></div>
<div class="a" style="left:554px;top:590px;width:428px;height:16px;border:1px solid #8e8ea2;border-radius:2px;background:linear-gradient(#f6f6fa,#e8e8ee 45%,#d0d0dc 80%,#c4c4d2)"></div>
<div class="btn" style="left:982px;top:590px;width:17px;height:16px"></div>
<svg style="left:0;top:0" width="1016" height="607"><path d="M1003.6 98.6 L1007.6 94.4 L1011.6 98.6" stroke="#1a1a1a" stroke-width="2.1" fill="none"/><path d="M1003.6 578.4 L1007.6 582.6 L1011.6 578.4" stroke="#1a1a1a" stroke-width="2.1" fill="none"/><path d="M239 593.4 L234.6 597.6 L239 601.8" stroke="#1a1a1a" stroke-width="2.1" fill="none"/><path d="M988.4 593.4 L992.8 597.6 L988.4 601.8" stroke="#1a1a1a" stroke-width="2.1" fill="none"/><g fill="#9a9ab0"><rect x="1004.5" y="256" width="6.5" height="1"/><rect x="1004.5" y="258" width="6.5" height="1"/><rect x="1004.5" y="260" width="6.5" height="1"/><rect x="1004.5" y="262" width="6.5" height="1"/><rect x="764" y="595" width="1" height="6"/><rect x="766" y="595" width="1" height="6"/><rect x="768" y="595" width="1" height="6"/><rect x="770" y="595" width="1" height="6"/></g></svg>
<div class="a" style="left:0;top:606px;width:1000px;height:1px;background:#fbfbfb"></div>
</div></body></html>
